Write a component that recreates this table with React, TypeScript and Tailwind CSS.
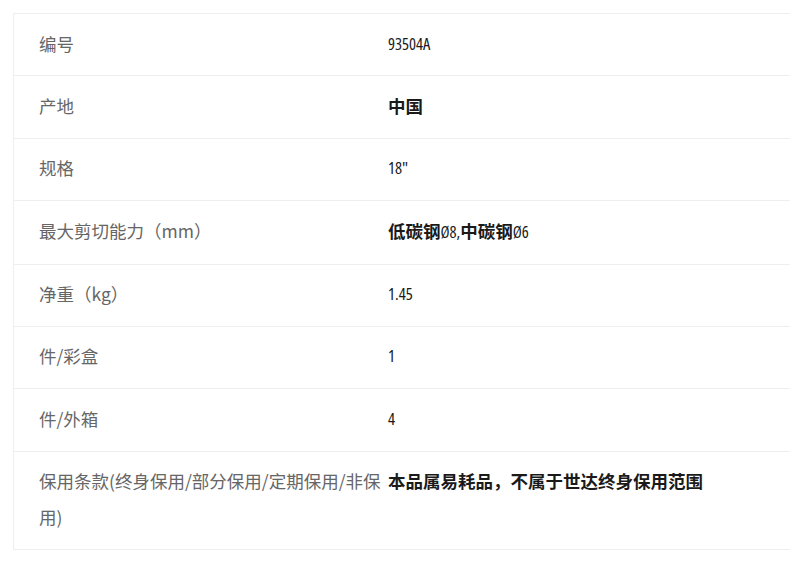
const rows: { label: string; value: string; cjk?: boolean }[] = [
  { label: '编号', value: '93504A' },
  { label: '产地', value: '中国', cjk: true },
  { label: '规格', value: '18"' },
  { label: '最大剪切能力（mm）', value: '低碳钢Ø8,中碳钢Ø6', cjk: true },
  { label: '净重（kg）', value: '1.45' },
  { label: '件/彩盒', value: '1' },
  { label: '件/外箱', value: '4' },
  {
    label: '保用条款(终身保用/部分保用/定期保用/非保用)',
    value: '本品属易耗品，不属于世达终身保用范围',
    cjk: true,
  },
]

// latin runs inside a CJK value render in the lighter condensed face
function MixedValue({ text }: { text: string }) {
  const parts = text.split(/([A-Za-z0-9Ø.,"]+)/).filter(Boolean)
  return (
    <>
      {parts.map((p, i) =>
        /^[A-Za-z0-9Ø.,"]+$/.test(p) ? (
          <span key={i} className="text-[16.5px] font-medium">
            {p}
          </span>
        ) : (
          <span key={i}>{p}</span>
        )
      )}
    </>
  )
}

function SpecRow({ label, value, cjk }: { label: string; value: string; cjk?: boolean }) {
  return (
    <div className="flex border-b border-[#eeeeee] pt-[11.5px] pb-[13.9px] leading-9">
      <div className="w-[374px] shrink-0 pl-[25px] text-[17.5px] text-[#666666] font-['Noto_Sans_CJK_SC',sans-serif]">
        {label}
      </div>
      {cjk ? (
        <div className="flex-1 text-[17.5px] font-bold text-[#1a1a1a] font-stretch-condensed font-['Open_Sans','Noto_Sans_CJK_SC',sans-serif]">
          <MixedValue text={value} />
        </div>
      ) : (
        <div className="flex-1 text-[16.5px] font-medium text-[#1a1a1a] font-stretch-condensed font-['Open_Sans','Noto_Sans_CJK_SC',sans-serif]">
          {value}
        </div>
      )}
    </div>
  )
}

export default function App() {
  return (
    <div className="h-[567px] w-[790px] overflow-hidden bg-white pl-[13px] pt-[13px]">
      <div className="w-[900px] border-l border-t border-[#eeeeee]">
        {rows.map((r) => (
          <SpecRow key={r.label} {...r} />
        ))}
      </div>
    </div>
  )
}
